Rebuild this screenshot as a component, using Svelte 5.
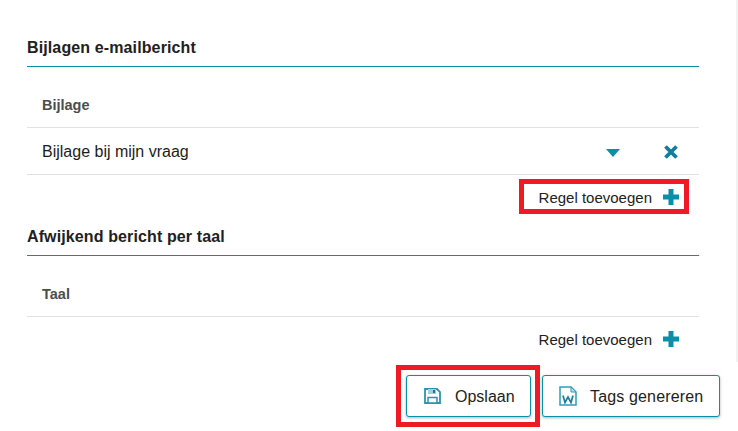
<script>
  const sections = [
    { title: 'Bijlagen e-mailbericht', column: 'Bijlage', rows: ['Bijlage bij mijn vraag'], marked: true },
    { title: 'Afwijkend bericht per taal', column: 'Taal', rows: [], marked: false }
  ];
</script>

<div class="page">
  <div class="content">
    {#each sections as section}
      <section>
        <h3>{section.title}</h3>
        <div class="col-head">{section.column}</div>
        {#each section.rows as row}
          <div class="row">
            <span class="row-text">{row}</span>
            <svg class="caret" width="14" height="8" viewBox="0 0 14 8"><path d="M0 0h14L7 8z" fill="#0a8fa8" /></svg>
            <svg class="remove" width="14" height="14" viewBox="0 0 14 14"><path d="M1.5 1.5l11 11M12.5 1.5l-11 11" stroke="#0f7f9c" stroke-width="3.8" fill="none" /></svg>
          </div>
        {/each}
        <div class="add-line">
          <div class="add" class:marked={section.marked}>
            <span>Regel toevoegen</span>
            <svg width="16" height="16" viewBox="0 0 16 16"><path d="M8 0v16M0 8h16" stroke="#0a8fa8" stroke-width="5" fill="none" /></svg>
          </div>
        </div>
      </section>
    {/each}

    <div class="buttons">
      <div class="marked-btn">
        <button>
          <svg width="17" height="16" viewBox="0 0 17 16">
            <path d="M1 1h12l3 3v11H1z" fill="#fff" stroke="#2f93ae" stroke-width="1.8" />
            <path d="M4 1h8v5H4z" fill="#9ad2e0" />
            <path d="M9 2h2v3H9z" fill="#14748f" />
            <path d="M4 9.5h9V15H4z" fill="#fff" stroke="#2f93ae" stroke-width="1.5" />
          </svg>
          <span class="save-label">Opslaan</span>
        </button>
      </div>
      <button class="tags">
        <svg width="18" height="20" viewBox="0 0 18 20">
          <path d="M1 1h11l5 5v13H1z" fill="#fff" stroke="#2f9dbb" stroke-width="1.5" />
          <path d="M12 1v5h5z" fill="#bfe0e9" stroke="#2f9dbb" stroke-width="1" />
          <path d="M4 9.5l2 7 3-5.5 3 5.5 2-7" fill="none" stroke="#1b7f9e" stroke-width="1.7" />
        </svg>
        <span class="tags-label">Tags genereren</span>
      </button>
    </div>
  </div>
  <div class="strip"></div>
</div>

<style>
  :global(body) {
    margin: 0;
    background: #fff;
  }

  .page {
    display: flex;
    justify-content: space-between;
    height: 431px;
    overflow: hidden;
    font-family: "Liberation Sans", Arial, sans-serif;
    color: #212121;
  }

  .content {
    width: 672px;
    margin-left: 27px;
    padding-top: 38px;
  }

  .strip {
    width: 2px;
    height: 362px;
    background: #f2f2f2;
  }

  section:first-child {
    height: 189px;
  }

  h3 {
    margin: 0;
    height: 28px;
    line-height: 19px;
    font-size: 16px;
    font-weight: bold;
    letter-spacing: 0.12px;
    color: #212121;
    border-bottom: 1px solid #0a8fa8;
  }

  .col-head {
    height: 61px;
    box-sizing: border-box;
    padding: 29px 0 0 15px;
    line-height: 18px;
    font-size: 14.5px;
    font-weight: bold;
    color: #4d4d4d;
    border-bottom: 1px solid #e2e2e2;
  }

  .row {
    display: flex;
    align-items: center;
    height: 46px;
    padding-left: 15px;
    font-size: 16px;
    color: #1c1c1c;
    border-bottom: 1px solid #e2e2e2;
  }

  .row-text {
    flex: 1;
    padding-top: 1px;
  }

  .caret {
    margin: 3px 44px 0 0;
  }

  .remove {
    margin: 2px 21px 0 0;
  }

  .add-line {
    display: flex;
    justify-content: flex-end;
    padding: 9px 20px 0 0;
  }

  .add {
    display: flex;
    align-items: center;
    gap: 11px;
    height: 25px;
    font-size: 15px;
    color: #222;
  }

  .add span {
    padding-top: 2px;
  }

  .add.marked {
    outline: 5px solid #ed1c24;
    padding-left: 15px;
    padding-right: 5px;
    margin-right: -5px;
  }

  .buttons {
    display: flex;
    justify-content: flex-end;
    align-items: center;
    gap: 2px;
    margin: 14px -21px 0 0;
  }

  .marked-btn {
    padding: 5px 4px 5px 5px;
    border: 5px solid #ed1c24;
  }

  button {
    display: flex;
    align-items: center;
    height: 42px;
    padding: 0;
    font-family: inherit;
    font-size: 16px;
    color: #222;
    background: #fff;
    border: 1px solid #0a8fa8;
    border-radius: 3px;
    box-shadow: 0 1px 3px rgba(0, 0, 0, 0.3);
  }

  button span {
    padding-top: 1px;
  }

  .marked-btn button {
    width: 125px;
    padding-left: 17px;
  }

  .save-label {
    margin-left: 14px;
  }

  .tags {
    width: 178px;
    padding-left: 16px;
  }

  .tags-label {
    margin-left: 13px;
    letter-spacing: 0.15px;
  }
</style>
